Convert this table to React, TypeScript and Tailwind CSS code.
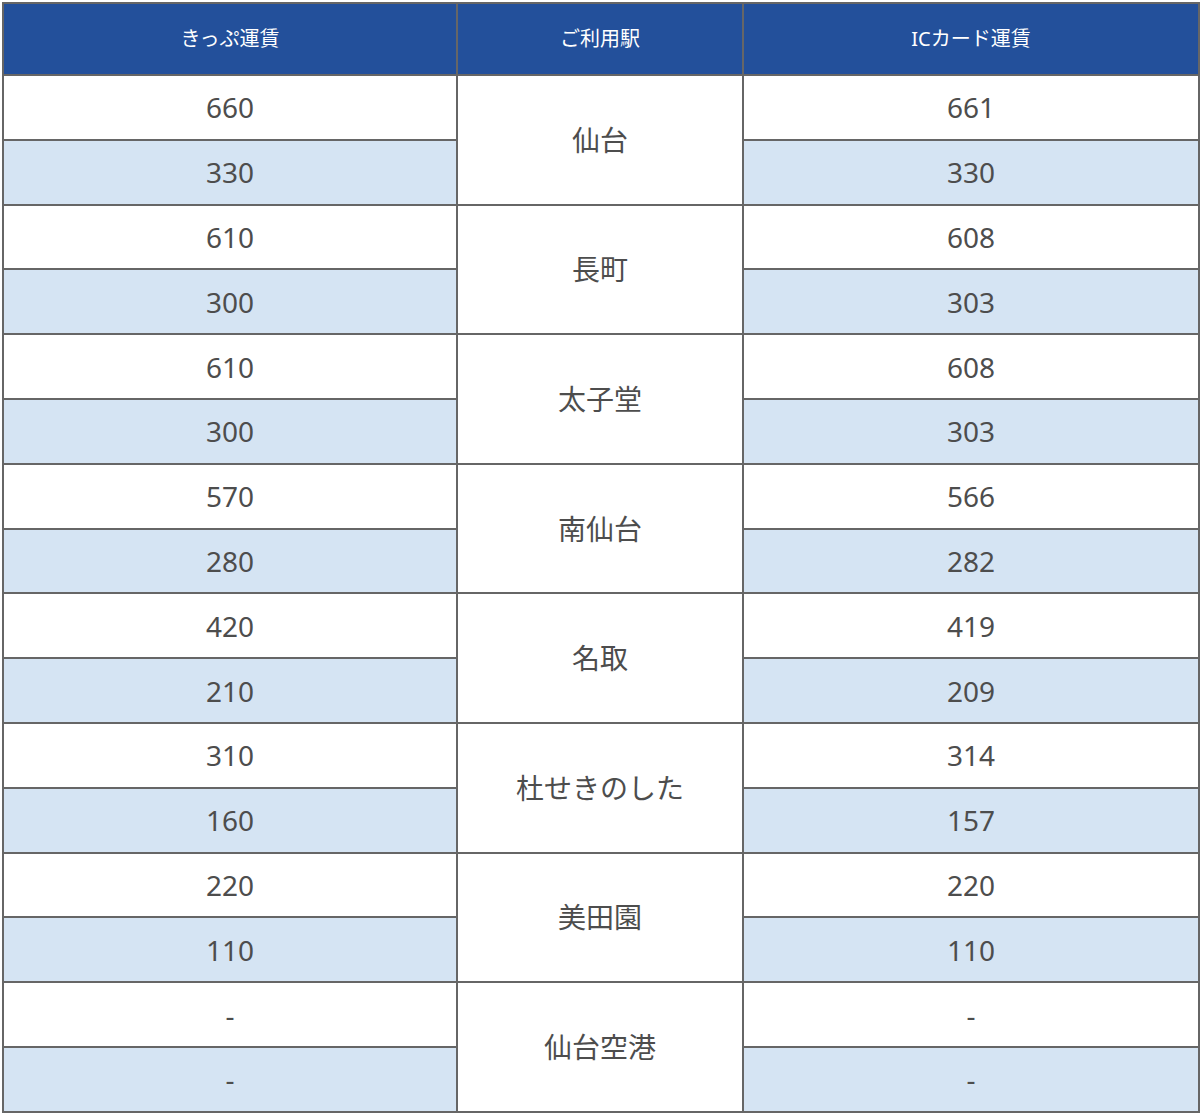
const rows: { station: string; ticket: [string, string]; ic: [string, string] }[] = [
  { station: "仙台", ticket: ["660", "330"], ic: ["661", "330"] },
  { station: "長町", ticket: ["610", "300"], ic: ["608", "303"] },
  { station: "太子堂", ticket: ["610", "300"], ic: ["608", "303"] },
  { station: "南仙台", ticket: ["570", "280"], ic: ["566", "282"] },
  { station: "名取", ticket: ["420", "210"], ic: ["419", "209"] },
  { station: "杜せきのした", ticket: ["310", "160"], ic: ["314", "157"] },
  { station: "美田園", ticket: ["220", "110"], ic: ["220", "110"] },
  { station: "仙台空港", ticket: ["-", "-"], ic: ["-", "-"] },
];

const cell = "border-2 border-[#666] text-center align-middle";

export default function App() {
  return (
    <div
      className="bg-white px-[2px] pt-[2px]"
      style={{ fontFamily: '"Noto Sans", "Noto Sans CJK JP", sans-serif' }}
    >
      <table className="w-[1196px] table-fixed border-collapse text-[#4d4d4d]">
        <colgroup>
          <col className="w-[454px]" />
          <col className="w-[286px]" />
          <col className="w-[456px]" />
        </colgroup>
        <thead>
          <tr className="h-[72px] bg-[#23509b] text-[20px] text-white">
            <th className={cell + " font-normal"}>きっぷ運賃</th>
            <th className={cell + " font-normal"}>ご利用駅</th>
            <th className={cell + " font-normal"}>ICカード運賃</th>
          </tr>
        </thead>
        <tbody className="text-[28px]">
          {rows.map((r) => (
            <>
              <tr key={r.station + "a"} className="h-[64.8px]">
                <td className={cell + " bg-white"}>{r.ticket[0]}</td>
                <td rowSpan={2} className={cell + " bg-white text-[28px]"}>
                  {r.station}
                </td>
                <td className={cell + " bg-white"}>{r.ic[0]}</td>
              </tr>
              <tr key={r.station + "b"} className="h-[64.8px]">
                <td className={cell + " bg-[#d5e4f3]"}>{r.ticket[1]}</td>
                <td className={cell + " bg-[#d5e4f3]"}>{r.ic[1]}</td>
              </tr>
            </>
          ))}
        </tbody>
      </table>
    </div>
  );
}
